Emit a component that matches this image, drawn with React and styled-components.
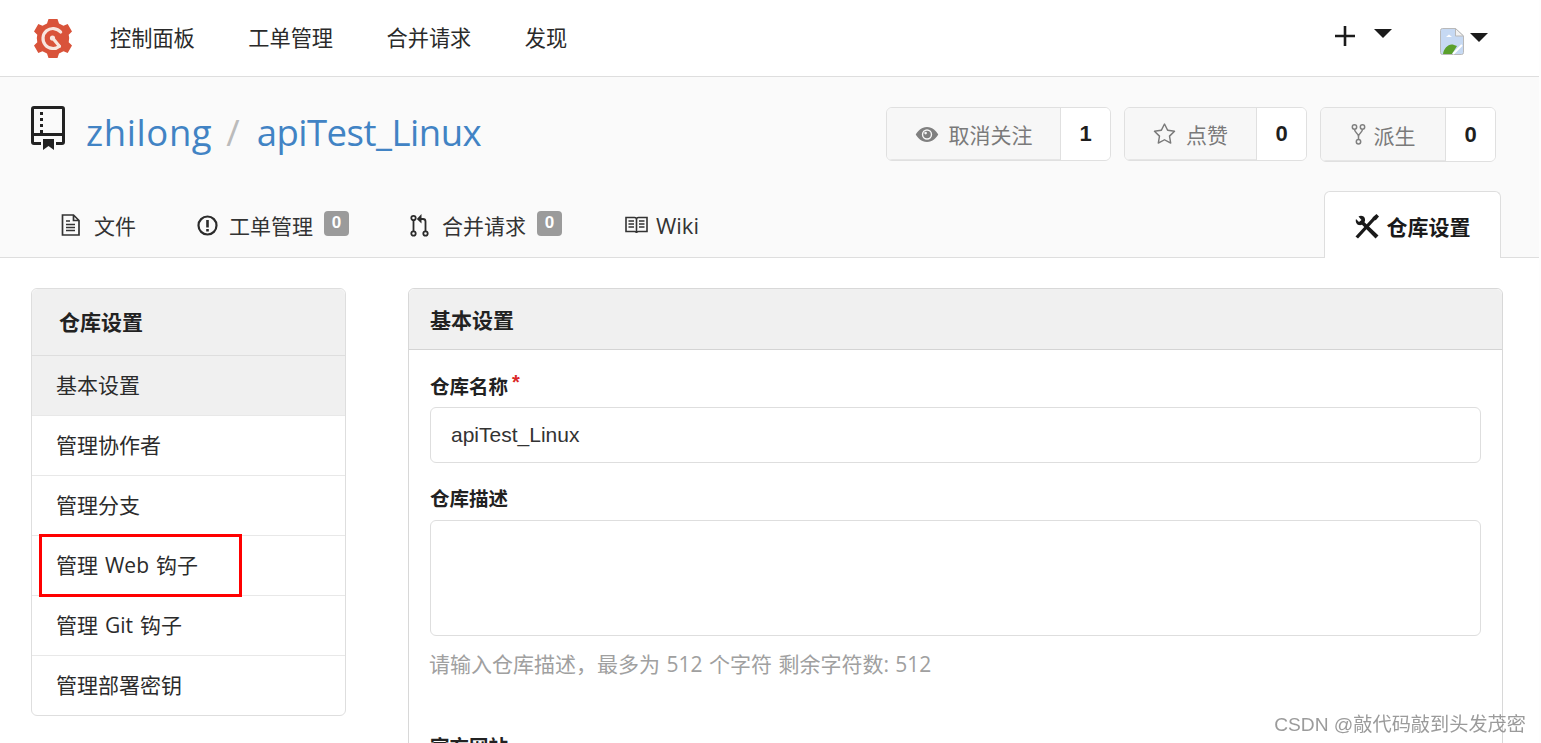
import React from "react";
import styled, { createGlobalStyle } from "styled-components";
import { GoStar } from "react-icons/go";

const SANS = `"Open Sans", "Noto Sans CJK SC", sans-serif`;
const ARIAL = `"Liberation Sans", "Noto Sans CJK SC", sans-serif`;

const Global = createGlobalStyle`
  html, body {
    margin: 0;
    height: 743px;
    overflow: hidden;
    background: #fdfdfd;
  }
  * { box-sizing: border-box; }
`;

const Page = styled.div`
  position: relative;
  width: 1539px;
  height: 743px;
  overflow: hidden;
  background: #fff;
  color: #212121;
  font-family: ${SANS};
`;

const Nav = styled.header`
  height: 77px;
  border-bottom: 1px solid #dedede;
  display: flex;
  align-items: center;
  padding: 0 51px 0 33px;
`;

const NavLinks = styled.nav`
  display: flex;
  gap: 53.5px;
  margin-left: 37px;
`;

const NavLink = styled.a`
  font-size: 21.2px;
  line-height: 28px;
  color: #2a2a2a;
`;

const NavRight = styled.div`
  margin-left: auto;
  display: flex;
  align-items: center;
`;

const Plus = styled.svg`
  width: 20px;
  height: 20px;
  margin-top: -4px;
`;

const Caret = styled.i`
  display: block;
  width: 0;
  height: 0;
  border-left: 9px solid transparent;
  border-right: 9px solid transparent;
  border-top: 9px solid #1b1b1b;
  margin: ${p => p.$margin};
`;

const AvatarGap = styled.span`
  width: 48px;
`;

const RepoHead = styled.section`
  height: 181px;
  background: #fafafa;
  border-bottom: 1px solid #dedede;
  display: flex;
  flex-direction: column;
`;

const RepoTop = styled.div`
  display: flex;
  align-items: flex-start;
  justify-content: space-between;
  padding: 30px 43px 0 30px;
  height: 114px;
`;

const RepoName = styled.div`
  display: flex;
  align-items: center;
  height: 52px;
  margin-top: -1px;
  font-size: 36.5px;
  color: #4183c4;
`;

const RepoPart = styled.span`
  letter-spacing: ${p => p.$track}px;
`;

const Slash = styled.span`
  color: #bbb;
  margin: 0 17px 0 14px;
`;

const RepoActions = styled.div`
  display: flex;
  gap: 13px;
`;

const ActionGroup = styled.div`
  display: flex;
  height: ${p => p.$tall ? 55 : 54}px;
  border: 1px solid #e0e0e0;
  border-radius: 6px;
  overflow: hidden;
`;

const ActionLabel = styled.div`
  width: ${p => p.$width}px;
  display: flex;
  align-items: center;
  justify-content: center;
  gap: ${p => p.$gap}px;
  background: #f7f7f7;
  border-right: 1px solid #e0e0e0;
  box-shadow: inset 0 -1px 0 #e6e6e6;
  color: #7a7a7a;
  font-size: 21px;
`;

const ActionCount = styled.div`
  width: ${p => p.$width}px;
  display: flex;
  align-items: center;
  justify-content: center;
  background: #fff;
  font-family: ${ARIAL};
  font-weight: 700;
  font-size: 22px;
  color: #1e1e1e;
`;

const Tabs = styled.div`
  display: flex;
  align-items: flex-end;
  height: 67px;
  padding: 0 38px 0 61px;
`;

const Tab = styled.a`
  height: 67px;
  display: flex;
  align-items: center;
  gap: ${p => p.$gap || 11}px;
  margin-right: ${p => p.$after || 0}px;
  font-size: 21px;
  color: #333;
  padding-top: 3px;
`;

const WikiTab = styled(Tab)`
  font-size: 22px;
  gap: 8px;
`;

const ActiveTab = styled(Tab)`
  margin-left: auto;
  width: 177px;
  margin-right: 0;
  margin-bottom: -1px;
  justify-content: center;
  background: #fff;
  border: 1px solid #dedede;
  border-bottom: none;
  border-radius: 6px 6px 0 0;
  font-weight: 700;
  color: #1a1a1a;
  gap: 8px;
  padding-top: 2px;
`;

const Badge = styled.span`
  width: 25px;
  height: 25px;
  margin-top: -4px;
  border-radius: 4px;
  background: #9b9b9b;
  color: #fff;
  font-family: ${ARIAL};
  font-weight: 700;
  font-size: 17px;
  display: flex;
  align-items: center;
  justify-content: center;
`;

const Body = styled.main`
  display: grid;
  grid-template-columns: 315px 1095px;
  gap: 62px;
  padding: 30px 0 0 31px;
  align-items: start;
`;

const SideMenu = styled.aside`
  position: relative;
  border: 1px solid #dedede;
  border-radius: 6px;
`;

const SideTitle = styled.div`
  height: 66px;
  background: #f0f0f0;
  border-radius: 6px 6px 0 0;
  display: flex;
  align-items: center;
  padding: 0 0 2px 27px;
  font-size: 21px;
  font-weight: 700;
  color: #222;
`;

const SideItem = styled.a`
  position: relative;
  display: flex;
  align-items: center;
  height: 60px;
  padding: 0 0 4px 24px;
  font-size: 21px;
  word-spacing: 1.5px;
  color: #2b2b2b;
  border-top: 1px solid ${p => p.$active ? "#dedede" : "#e8e8e8"};
  background: ${p => p.$active ? "#f0f0f0" : "transparent"};
`;

// the red box somebody drew on the screenshot
const Marker = styled.span`
  position: absolute;
  z-index: 1;
  left: 7px;
  top: -2px;
  width: 203px;
  height: 63px;
  border: 3px solid #f00;
`;

const Panel = styled.section`
  border: 1px solid #d8d8d8;
  border-radius: 6px 6px 0 0;
  height: 480px;
`;

const PanelTitle = styled.div`
  height: 61px;
  background: #f0f0f0;
  border-bottom: 1px solid #d4d4d4;
  border-radius: 6px 6px 0 0;
  display: flex;
  align-items: center;
  padding-left: 21px;
  font-size: 21px;
  font-weight: 700;
  color: #222;
`;

const Form = styled.div`
  padding: 23px 21px 0;
  display: flex;
  flex-direction: column;
`;

const Label = styled.label`
  display: block;
  height: 28px;
  margin-top: ${p => p.$top || 0}px;
  font-size: 19.5px;
  line-height: 28px;
  font-weight: 700;
  color: #222;
`;

const Star = styled.span`
  color: #db2828;
  font-size: 20px;
  margin-left: 4px;
  position: relative;
  top: -5px;
  font-family: ${ARIAL};
`;

const Input = styled.div`
  height: 56px;
  margin-top: 6px;
  padding-left: 20px;
  border: 1px solid #dedede;
  border-radius: 6px;
  display: flex;
  align-items: center;
  font-family: ${ARIAL};
  font-size: 21px;
  color: #333;
`;

const Textarea = styled.div`
  height: 116px;
  margin-top: 7px;
  border: 1px solid #dedede;
  border-radius: 6px;
`;

const Help = styled.div`
  margin-top: 14px;
  margin-left: -1px;
  font-size: 21px;
  word-spacing: 1px;
  line-height: 28px;
  color: #a0a0a0;
`;

const Watermark = styled.div`
  position: absolute;
  right: 13px;
  bottom: 6px;
  font-family: ${ARIAL};
  font-size: 19.2px;
  color: #8a8a8a;
  opacity: 0.85;
`;

const LogoSvg = styled.svg`
  filter: blur(0.5px);
  flex: none;
`;

const AvatarSvg = styled.svg`
  margin-top: 7px;
`;

const BookSvg = styled.svg`
  margin: -9px 21px 0 1px;
`;

const Logo = () => (
  <LogoSvg width="40" height="41" viewBox="0 0 40 41">
    <path fill="#d9533a" d="M15.500 1h9l1.500 4.500 4.500 2.200 4.200-1.600 4.300 7.500-3.300 3.200a13 13 0 0 1 0 7.400l3.300 3.200-4.300 7.500-4.200-1.600-4.500 2.200-1.500 4.500h-9L14 35.500l-4.500-2.200-4.200 1.600-4.300-7.500 3.300-3.200a13 13 0 0 1 0-7.400L1 13.600l4.300-7.500 4.200 1.600L14 5.500z" />
    <g fill="none" stroke="#f8e6df" strokeWidth="3.200" strokeLinecap="round">
      <path d="M27.660 14.070A10 10 0 1 0 26.430 28.160" />
      <path d="M20 20.500l6.430 7.660" />
    </g>
    <circle cx="19.500" cy="20" r="2.600" fill="#f8e6df" />
  </LogoSvg>
);

const BrokenImage = () => (
  <AvatarSvg width="24" height="27" viewBox="0 0 24 27">
    <path fill="#c6d9f3" stroke="#b9b9b9" d="M2.500.5h13l8 7.500v16.500a2 2 0 0 1-2 2h-19a2 2 0 0 1-2-2V2.500a2 2 0 0 1 2-2z" />
    <path fill="#f2f2f2" stroke="#b9b9b9" d="M15.500.5v7.500h8z" />
    <path fill="#fff" d="M6 9l3-2.500 3 2.500z" />
    <path fill="#5aa02c" d="M3 26c1-6 6-11 11-9l3 1-5 8z" />
    <path fill="none" stroke="#fff" strokeWidth="2" d="M13 26l9-9" />
  </AvatarSvg>
);

const BookIcon = () => (
  <BookSvg width="34" height="44" viewBox="0 0 34 44">
    <path fill="#222" fillRule="evenodd" d="M3 0h28a3 3 0 0 1 3 3v33a3 3 0 0 1-3 3h-6v-3h6v-6H3v6h7v3H3a3 3 0 0 1-3-3V3a3 3 0 0 1 3-3zm0 3v24h28V3z" />
    <path fill="#222" d="M9 6h3v3H9zM9 12h3v3H9zM9 18h3v3H9zM9 24h3v3H9zM12 33h11v11l-5.500-4-5.500 4z" />
  </BookSvg>
);

const EyeIcon = () => (
  <svg width="24" height="15" viewBox="0 0 24 16">
    <path fill="#808080" fillRule="evenodd" d="M12 0c6 0 10 4.500 12 8-2 3.500-6 8-12 8S2 11.500 0 8c2-3.500 6-8 12-8zm0 2.500a5.500 5.500 0 1 0 0 11 5.500 5.500 0 0 0 0-11z" />
    <circle cx="12" cy="8" r="4" fill="#808080" />
    <circle cx="10.500" cy="6.500" r="1.400" fill="#f7f7f7" />
  </svg>
);

const ForkIcon = () => (
  <svg width="15" height="21" viewBox="0 0 15 21">
    <g fill="none" stroke="#808080" strokeWidth="1.500">
      <circle cx="3.500" cy="3" r="2.200" />
      <circle cx="11.500" cy="3" r="2.200" />
      <circle cx="7.500" cy="17.800" r="2.200" />
      <path d="M3.500 5.200c0 3.500 4 4 4 7.300v3M11.500 5.200c0 3.500-4 4-4 7.300" />
    </g>
  </svg>
);

const FileIcon = () => (
  <svg width="19" height="22" viewBox="0 0 19 22">
    <path fill="none" stroke="#333" strokeWidth="1.700" d="M1.500 1h11l5.500 5.500V21H1.500zM12.500 1v5.500H18" />
    <path fill="none" stroke="#333" strokeWidth="1.700" d="M5 7h4M5 10.500h9M5 13.500h9M5 16.500h9" />
  </svg>
);

const IssueIcon = () => (
  <svg width="21" height="21" viewBox="0 0 21 21">
    <circle cx="10.500" cy="10.500" r="9" fill="none" stroke="#2b2b2b" strokeWidth="2.200" />
    <path fill="#2b2b2b" d="M9.200 5h2.600v7.500H9.200zM9.200 14h2.600v2.600H9.200z" />
  </svg>
);

const PullIcon = () => (
  <svg width="21" height="23" viewBox="0 0 21 23">
    <g fill="none" stroke="#2b2b2b" strokeWidth="1.800">
      <circle cx="3.500" cy="4" r="2.200" />
      <circle cx="3.500" cy="19.500" r="2.200" />
      <circle cx="15.500" cy="19.500" r="2.200" />
      <path d="M3.500 6.500v10.500M15.500 17V7.500q0-2.500-2.500-2.500h-2" />
    </g>
    <path fill="#2b2b2b" d="M11.500 0v9.500L6.800 5z" />
  </svg>
);

const WikiIcon = () => (
  <svg width="23" height="18" viewBox="0 0 23 18">
    <path fill="none" stroke="#333" strokeWidth="1.600" d="M1 1.500h8.500q2 0 2 2 0-2 2-2H22v14h-8.500q-2 0-2 1.500 0-1.500-2-1.500H1zM11.500 3.500V17" />
    <path fill="none" stroke="#333" strokeWidth="1.500" d="M3.500 5h5.500M3.500 8h5.500M3.500 11h5.500M14 5h5.500M14 8h5.500M14 11h5.500" />
  </svg>
);

const ToolsIcon = () => (
  <svg width="24" height="25" viewBox="0 0 24 25">
    <path fill="#1a1a1a" d="M21.500 0L24 2.500l-3 3.500-1.500.5L3 24.500.5 22.500 17 4.500l1-1.500z" />
    <path fill="#1a1a1a" d="M1 5l3 3 2.500-2L3.500 2.500C6 1 9.500 2 10 5c.2 1.300 0 2.300-.5 3.200L23.500 21.500 20.500 24.500 7 10.800c-1 .4-2 .6-3.200.3C1.500 10.500.2 7.500 1 5z" />
  </svg>
);

const App = () => (
  <Page>
    <Global />
    <Nav>
      <Logo />
      <NavLinks>
        <NavLink>控制面板</NavLink>
        <NavLink>工单管理</NavLink>
        <NavLink>合并请求</NavLink>
        <NavLink>发现</NavLink>
      </NavLinks>
      <NavRight>
        <Plus viewBox="0 0 20 20">
          <path fill="#1b1b1b" d="M8.700 0h2.600v8.700H20v2.600h-8.700V20H8.700v-8.700H0V8.700h8.700z" />
        </Plus>
        <Caret $margin="-9px 0 0 19px" />
        <AvatarGap />
        <BrokenImage />
        <Caret $margin="-1px 0 0 6px" />
      </NavRight>
    </Nav>
    <RepoHead>
      <RepoTop>
        <RepoName>
          <BookIcon />
          <RepoPart $track={0.6}>zhilong</RepoPart>
          <Slash>/</Slash>
          <RepoPart $track={-0.5}>apiTest_Linux</RepoPart>
        </RepoName>
        <RepoActions>
          <ActionGroup>
            <ActionLabel $width={174} $gap={10}><EyeIcon />取消关注</ActionLabel>
            <ActionCount $width={49}>1</ActionCount>
          </ActionGroup>
          <ActionGroup>
            <ActionLabel $width={132} $gap={10}><GoStar size={23} />点赞</ActionLabel>
            <ActionCount $width={49}>0</ActionCount>
          </ActionGroup>
          <ActionGroup $tall>
            <ActionLabel $width={125} $gap={8}><ForkIcon />派生</ActionLabel>
            <ActionCount $width={49}>0</ActionCount>
          </ActionGroup>
        </RepoActions>
      </RepoTop>
      <Tabs>
        <Tab $gap={14} $after={61}><FileIcon />文件</Tab>
        <Tab $after={61}><IssueIcon />工单管理<Badge>0</Badge></Tab>
        <Tab $after={63}><PullIcon />合并请求<Badge>0</Badge></Tab>
        <WikiTab><WikiIcon />Wiki</WikiTab>
        <ActiveTab><ToolsIcon />仓库设置</ActiveTab>
      </Tabs>
    </RepoHead>
    <Body>
      <SideMenu>
        <SideTitle>仓库设置</SideTitle>
        <SideItem $active>基本设置</SideItem>
        <SideItem>管理协作者</SideItem>
        <SideItem>管理分支</SideItem>
        <SideItem>管理 Web 钩子<Marker /></SideItem>
        <SideItem>管理 Git 钩子</SideItem>
        <SideItem>管理部署密钥</SideItem>
      </SideMenu>
      <Panel>
        <PanelTitle>基本设置</PanelTitle>
        <Form>
          <Label>仓库名称<Star>*</Star></Label>
          <Input>apiTest_Linux</Input>
          <Label $top={22}>仓库描述</Label>
          <Textarea />
          <Help>请输入仓库描述，最多为 512 个字符 剩余字符数: 512</Help>
          <Label $top={55}>官方网站</Label>
        </Form>
      </Panel>
    </Body>
    <Watermark>CSDN @敲代码敲到头发茂密</Watermark>
  </Page>
);

export default App;
